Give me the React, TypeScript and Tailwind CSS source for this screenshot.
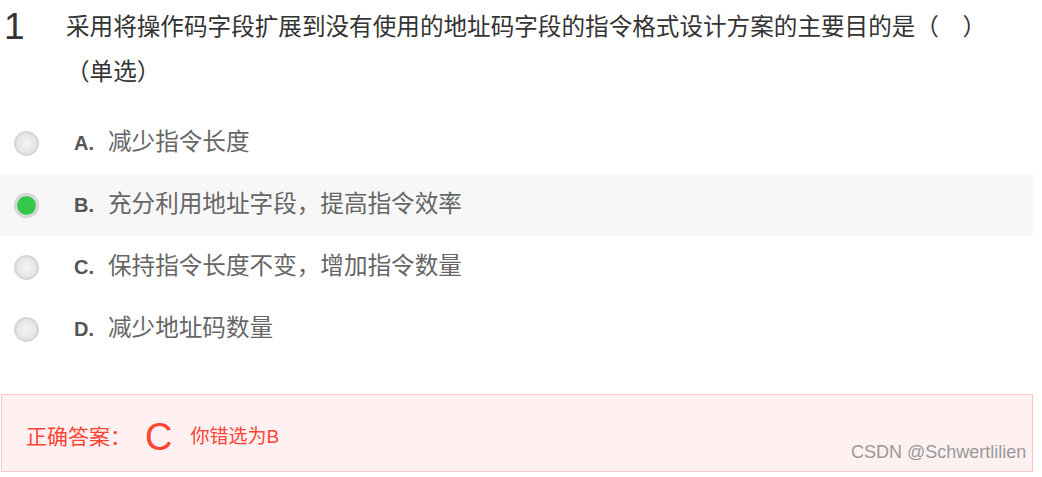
import React from "react";

const options = [
  { key: "A", text: "减少指令长度", checked: false },
  { key: "B", text: "充分利用地址字段，提高指令效率", checked: true },
  { key: "C", text: "保持指令长度不变，增加指令数量", checked: false },
  { key: "D", text: "减少地址码数量", checked: false },
];

const Radio: React.FC<{ checked: boolean }> = ({ checked }) =>
  checked ? (
    <span className="flex w-[25px] h-[25px] items-center justify-center rounded-full bg-[#dcdcdc] shadow-[inset_0_0_2px_#bbb]">
      <span className="block w-[19px] h-[19px] rounded-full bg-[#35c84d]" />
    </span>
  ) : (
    <span className="block w-[25px] h-[25px] rounded-full border-2 border-[#d6d6d6] bg-[radial-gradient(circle,#f4f4f4_0%,#e6e6e6_60%,#dadada_100%)]" />
  );

const App: React.FC = () => {
  return (
    <div
      className="relative w-[1042px] h-[477px] bg-white overflow-hidden"
      style={{ fontFamily: '"Liberation Sans", "Noto Sans CJK SC", sans-serif' }}
    >
      {/* Question */}
      <div className="flex h-[112px]">
        <div className="w-[66px] pl-[4px] pt-[4px] text-[37px] leading-[45px] text-[#333]">1</div>
        <div className="pt-[5px] text-[23.6px] leading-[45px] text-[#333]">
          <div>采用将操作码字段扩展到没有使用的地址码字段的指令格式设计方案的主要目的是（　）</div>
          <div>（单选）</div>
        </div>
      </div>

      {/* Options */}
      <div className="w-[1033px]">
        {options.map((o) => (
          <div
            key={o.key}
            className={`flex items-center h-[62px] ${o.checked ? "bg-[#f7f7f7]" : ""}`}
          >
            <div className="ml-[14px] w-[60px]">
              <Radio checked={o.checked} />
            </div>
            <span className="w-[34px] text-[20px] font-bold text-[#555]">{o.key}.</span>
            <span className="text-[23.6px] text-[#666]">{o.text}</span>
          </div>
        ))}
      </div>

      {/* Answer box */}
      <div className="mt-[34px] ml-[1px] w-[1032px] h-[78px] border border-[#f8c6c6] bg-[#fff1f1] flex items-center pl-[24px] pt-[8px] text-[#ff4433]">
        <span className="text-[21px]">正确答案：</span>
        <span className="ml-[14px] text-[38px] leading-none">C</span>
        <span className="ml-[18px] text-[19px]">你错选为B</span>
      </div>

      {/* Watermark */}
      <div className="absolute left-[851px] top-[442px] text-[18px] leading-[20px] text-[#999]">
        CSDN @Schwertlilien
      </div>
    </div>
  );
};

export default App;
